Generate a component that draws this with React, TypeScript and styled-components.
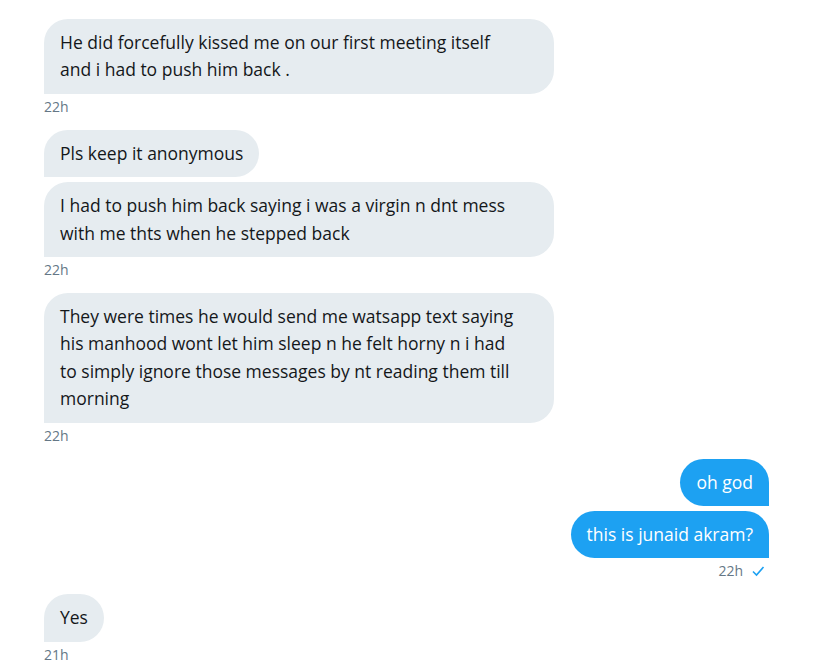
import React from "react";
import styled, { createGlobalStyle } from "styled-components";

const GlobalStyle = createGlobalStyle`
  html, body {
    margin: 0;
    padding: 0;
    background: #ffffff;
  }
  body {
    font-family: "Open Sans", "Noto Sans", sans-serif;
  }
`;

const Thread = styled.div`
  display: flex;
  flex-direction: column;
  padding: 19px 69px 0 44px;
  width: 838px;
  box-sizing: border-box;
`;

const Group = styled.div<{ $mine?: boolean }>`
  display: flex;
  flex-direction: column;
  align-items: ${(p) => (p.$mine ? "flex-end" : "flex-start")};
  gap: 5px;
  margin-bottom: 13px;
`;

// wrapped messages fill the full bubble width, text wraps a bit short of it
const Bubble = styled.div<{ $mine?: boolean; $wide?: boolean }>`
  box-sizing: border-box;
  padding: 10px 16px;
  ${(p) => (p.$wide ? "width: 510px; padding-right: 30px;" : "")}
  font-size: 17.5px;
  line-height: 27.4px;
  border-radius: 24px;
  background: ${(p) => (p.$mine ? "#1da1f2" : "#e6ecf0")};
  color: ${(p) => (p.$mine ? "#ffffff" : "#14171a")};
  ${(p) =>
    p.$mine ? "border-bottom-right-radius: 0;" : "border-bottom-left-radius: 0;"}
`;

const Meta = styled.div`
  display: flex;
  align-items: center;
  gap: 8px;
  margin-top: -2px;
  font-size: 14px;
  line-height: 20px;
  color: #657786;
  padding-right: 4px;
`;

const Check = styled.svg`
  width: 14px;
  height: 14px;
  fill: none;
  stroke: #1da1f2;
  stroke-width: 1.6;
`;

type Msg = { text: string; wide?: boolean };
type GroupData = { mine?: boolean; time: string; seen?: boolean; msgs: Msg[] };

const groups: GroupData[] = [
  {
    time: "22h",
    msgs: [
      {
        wide: true,
        text: "He did forcefully kissed me on our first meeting itself and i had to push him back .",
      },
    ],
  },
  {
    time: "22h",
    msgs: [
      { text: "Pls keep it anonymous" },
      {
        wide: true,
        text: "I had to push him back saying i was a virgin n dnt mess with me thts when he stepped back",
      },
    ],
  },
  {
    time: "22h",
    msgs: [
      {
        wide: true,
        text: "They were times he would send me watsapp text saying his manhood wont let him sleep n he felt horny n i had to simply ignore those messages by nt reading them till morning",
      },
    ],
  },
  {
    mine: true,
    seen: true,
    time: "22h",
    msgs: [{ text: "oh god" }, { text: "this is junaid akram?" }],
  },
  {
    time: "21h",
    msgs: [{ text: "Yes" }],
  },
];

export default function App() {
  return (
    <>
      <GlobalStyle />
      <Thread>
        {groups.map((g, i) => (
          <Group key={i} $mine={g.mine}>
            {g.msgs.map((m, j) => (
              <Bubble key={j} $mine={g.mine} $wide={m.wide}>
                {m.text}
              </Bubble>
            ))}
            <Meta>
              <span>{g.time}</span>
              {g.seen && (
                <Check viewBox="0 0 14 14">
                  <path d="M2 7.5 L5.5 11 L12.5 3" />
                </Check>
              )}
            </Meta>
          </Group>
        ))}
      </Thread>
    </>
  );
}
